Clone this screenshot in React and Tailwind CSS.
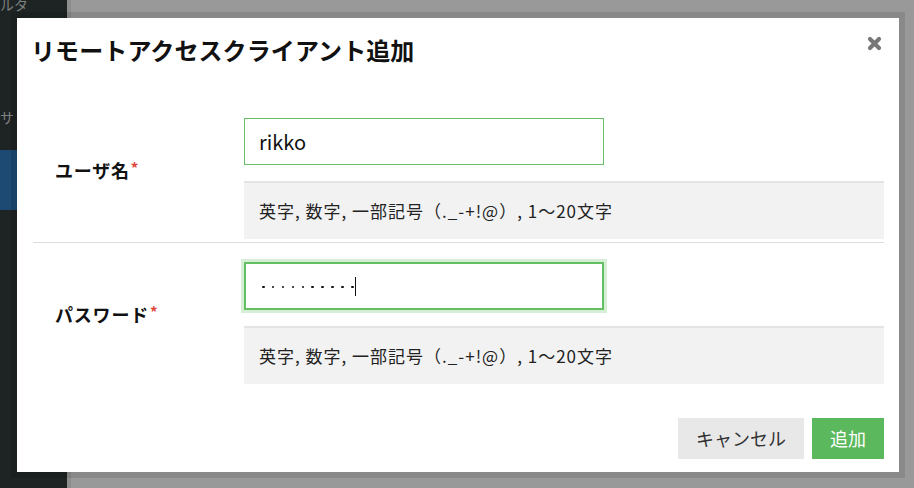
import React from 'react';

const HELP = '英字, 数字, 一部記号（._-+!@）, 1〜20文字';

const Field = ({ label, children }) => (
  <div className="flex">
    <div className="w-[211px] shrink-0 pl-[22px] pt-[40px]">
      <span className="text-[18px] leading-[24px] font-bold tracking-[0.8px] text-[#111]">
        {label}
        <span className="ml-[1px] align-top text-[15px] leading-[20px] text-[#e0463c]">*</span>
      </span>
    </div>
    <div className="flex-1">
      {children}
      <div className="mt-[16px] flex h-[58px] items-center border-t-2 border-[#e4e4e4] bg-[#f2f2f2] pl-[15px] text-[17px] tracking-[1px] text-[#222]">
        {HELP}
      </div>
    </div>
  </div>
);

const dots = [0, 1, 2, 3, 4, 5, 6, 7, 8, 9];

export default function App() {
  return (
    <div
      className="relative flex h-[488px] w-[914px] overflow-hidden"
      style={{ fontFamily: '"Noto Sans CJK JP", "Noto Sans", sans-serif' }}
    >
      {/* sidebar behind overlay */}
      <div className="relative w-[67px] shrink-0 bg-[#1e2323]">
        <div className="absolute left-0 top-[-4px] text-[14px] leading-[16px] text-[#7d8080]">ルタ</div>
        <div className="absolute left-0 top-[107px] text-[14px] text-[#7d8080]">サ</div>
        <div className="absolute left-0 top-[150px] h-[60px] w-full bg-[#1d4a72]"></div>
      </div>
      <div className="w-[4px] bg-[#8d8d8d]"></div>
      <div className="flex-1 bg-[#999999]"></div>

      {/* modal */}
      <div className="absolute left-[11px] top-[12px] h-[466px] w-[894px] border-[6px] border-black/10 bg-white bg-clip-padding">
        <div className="flex h-full flex-col pl-4 pr-[15px]">
          <div className="flex h-[64px] items-center justify-between">
            <h1 className="ml-[-2px] text-[24px] font-bold leading-none tracking-[0.1px] text-[#111]">
              リモートアクセスクライアント追加
            </h1>
            <svg className="mb-[14px] mr-[2px]" width="15" height="15" viewBox="0 0 15 15">
              <path d="M3 3 L12 12 M12 3 L3 12" stroke="#777" strokeWidth="4.2" strokeLinecap="round" />
            </svg>
          </div>

          <div className="pt-[36px]">
            <Field label="ユーザ名">
              <div className="flex h-[47px] w-[360px] items-center border-[1.5px] border-[#66bf66] pl-[14px] text-[20px] text-[#111]">
                rikko
              </div>
            </Field>
          </div>
          <div className="mt-[3px] h-px bg-[#dddddd]"></div>

          <div className="pt-[19px]">
            <Field label="パスワード">
              <div className="flex h-[48px] w-[360px] items-center border-2 border-[#62c062] pl-[16px] shadow-[0_0_0_3px_#d6eed6]">
                <div className="flex items-center gap-[7.4px] pt-[2px]">
                  {dots.map((d) => (
                    <span key={d} className="h-[2.5px] w-[2.5px] rounded-full bg-[#111]"></span>
                  ))}
                </div>
                <span className="ml-[1px] h-[19px] w-[1.5px] bg-[#111]"></span>
              </div>
            </Field>
          </div>

          <div className="mt-[34px] flex justify-end gap-2">
            <button className="h-[41px] w-[126px] bg-[#e8e8e8] text-[18px] text-[#333]">キャンセル</button>
            <button className="h-[41px] w-[72px] bg-[#5cb85c] text-[18px] text-white">追加</button>
          </div>
        </div>
      </div>
    </div>
  );
}
